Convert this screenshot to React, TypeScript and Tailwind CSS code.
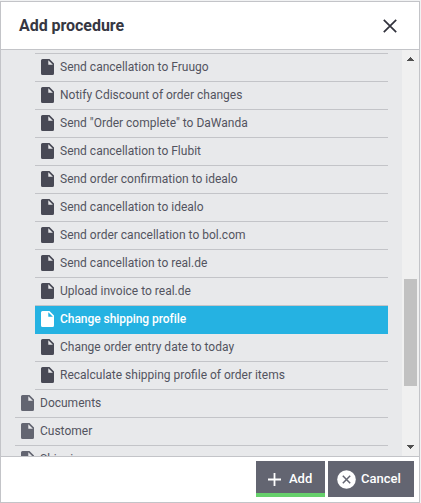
const procedures = [
  'Send cancellation to Fruugo',
  'Notify Cdiscount of order changes',
  'Send "Order complete" to DaWanda',
  'Send cancellation to Flubit',
  'Send order confirmation to idealo',
  'Send cancellation to idealo',
  'Send order cancellation to bol.com',
  'Send cancellation to real.de',
  'Upload invoice to real.de',
  'Change shipping profile',
  'Change order entry date to today',
  'Recalculate shipping profile of order items',
];
const groups = ['Documents', 'Customer', 'Shipping'];
const selected = 'Change shipping profile';

function FileIcon({ className }: { className: string }) {
  return (
    <svg viewBox="0 0 13 16" className={`h-4 w-[13px] shrink-0 ${className}`} fill="currentColor">
      <path fillRule="evenodd" d="M1.5 0H8.5L13 4.5V14.5Q13 16 11.5 16H1.5Q0 16 0 14.5V1.5Q0 0 1.5 0ZM7.3 1.2V5.7H11.9Z" />
    </svg>
  );
}

function Row({ label, nested }: { label: string; nested?: boolean }) {
  const active = label === selected;
  const tone = active
    ? 'border-[#25b2e2] bg-[#25b2e2] font-medium tracking-[-0.05px] text-white'
    : 'border-[#c3c4c8] text-[#53545f]';
  const icon = active ? 'text-white' : nested ? 'text-[#484955]' : 'text-[#636571]';
  return (
    <li className={`flex h-7 shrink-0 items-center border-b pb-0.5 pl-1.5 ${nested ? 'ml-5' : ''} ${tone}`}>
      <FileIcon className={icon} />
      <span className="ml-[6px] whitespace-nowrap text-[12px] leading-4">{label}</span>
    </li>
  );
}

export default function App() {
  return (
    <div className="h-[503px] w-[421px] overflow-hidden bg-[#f1f2f3] pt-px font-['Roboto',sans-serif]">
      <div className="flex h-[502px] w-[420px] flex-col border border-[#c3c4c8] bg-white">
        <header className="flex h-[48px] shrink-0 items-center justify-between border-b border-[#c3c4c8] pr-[22px] pl-[18px]">
          <h1 className="text-[16px] font-bold tracking-[-0.05px] text-[#363742]">Add procedure</h1>
          <svg viewBox="0 0 14 14" className="size-[14px]" fill="none" stroke="#31323c" strokeWidth="1.7">
            <path d="M.8.8 13.2 13.2M13.2.8.8 13.2" />
          </svg>
        </header>

        <main className="flex h-[406px] shrink-0 overflow-hidden bg-[#e8e9eb]">
          <ul className="flex min-w-0 flex-1 flex-col pt-[3px] pr-[14px] pl-[14px]">
            <li className="ml-5 h-px shrink-0 bg-[#c3c4c8]" />
            {procedures.map((label) => <Row key={label} label={label} nested />)}
            {groups.map((label) => <Row key={label} label={label} />)}
          </ul>
          <div className="flex w-[17px] flex-col items-center bg-[#f0f0f0]">
            <svg viewBox="0 0 7 4" className="mt-[7px] h-1 w-[7px] shrink-0" fill="#505050" shapeRendering="crispEdges">
              <path d="M3 0h1v1h1v1h1v1h1v1H0V3h1V2h1V1h1z" />
            </svg>
            <div className="mt-[218px] h-[107px] w-[13px] shrink-0 bg-[#c1c1c1]" />
            <svg viewBox="0 0 7 4" className="mt-[59px] h-1 w-[7px] shrink-0" fill="#505050" shapeRendering="crispEdges">
              <path d="M3 4h1V3h1V2h1V1h1V0H0v1h1v1h1v1h1z" />
            </svg>
          </div>
        </main>

        <footer className="flex flex-1 items-start justify-end gap-[3px] border-t border-[#c3c4c8] pt-1 pr-[5px] text-[13px] font-medium text-white">
          <button className="flex h-9 w-[69px] items-center border-b-4 border-[#66d06b] bg-[#636571] pt-1 pl-3">
            <svg viewBox="0 0 13 13" className="size-[13px]" fill="none" stroke="white" strokeWidth="1.8">
              <path d="M6.5 0V13M0 6.5H13" />
            </svg>
            <span className="ml-2">Add</span>
          </button>
          <button className="flex h-9 w-[86px] items-center bg-[#636571] pl-[9px]">
            <svg viewBox="0 0 19 19" className="size-[19px]">
              <circle cx="9.5" cy="9.5" r="9.3" fill="white" />
              <path d="M5.8 5.8 13.2 13.2M13.2 5.8 5.8 13.2" stroke="#636571" strokeWidth="1.5" />
            </svg>
            <span className="ml-[5px]">Cancel</span>
          </button>
        </footer>
      </div>
    </div>
  );
}
